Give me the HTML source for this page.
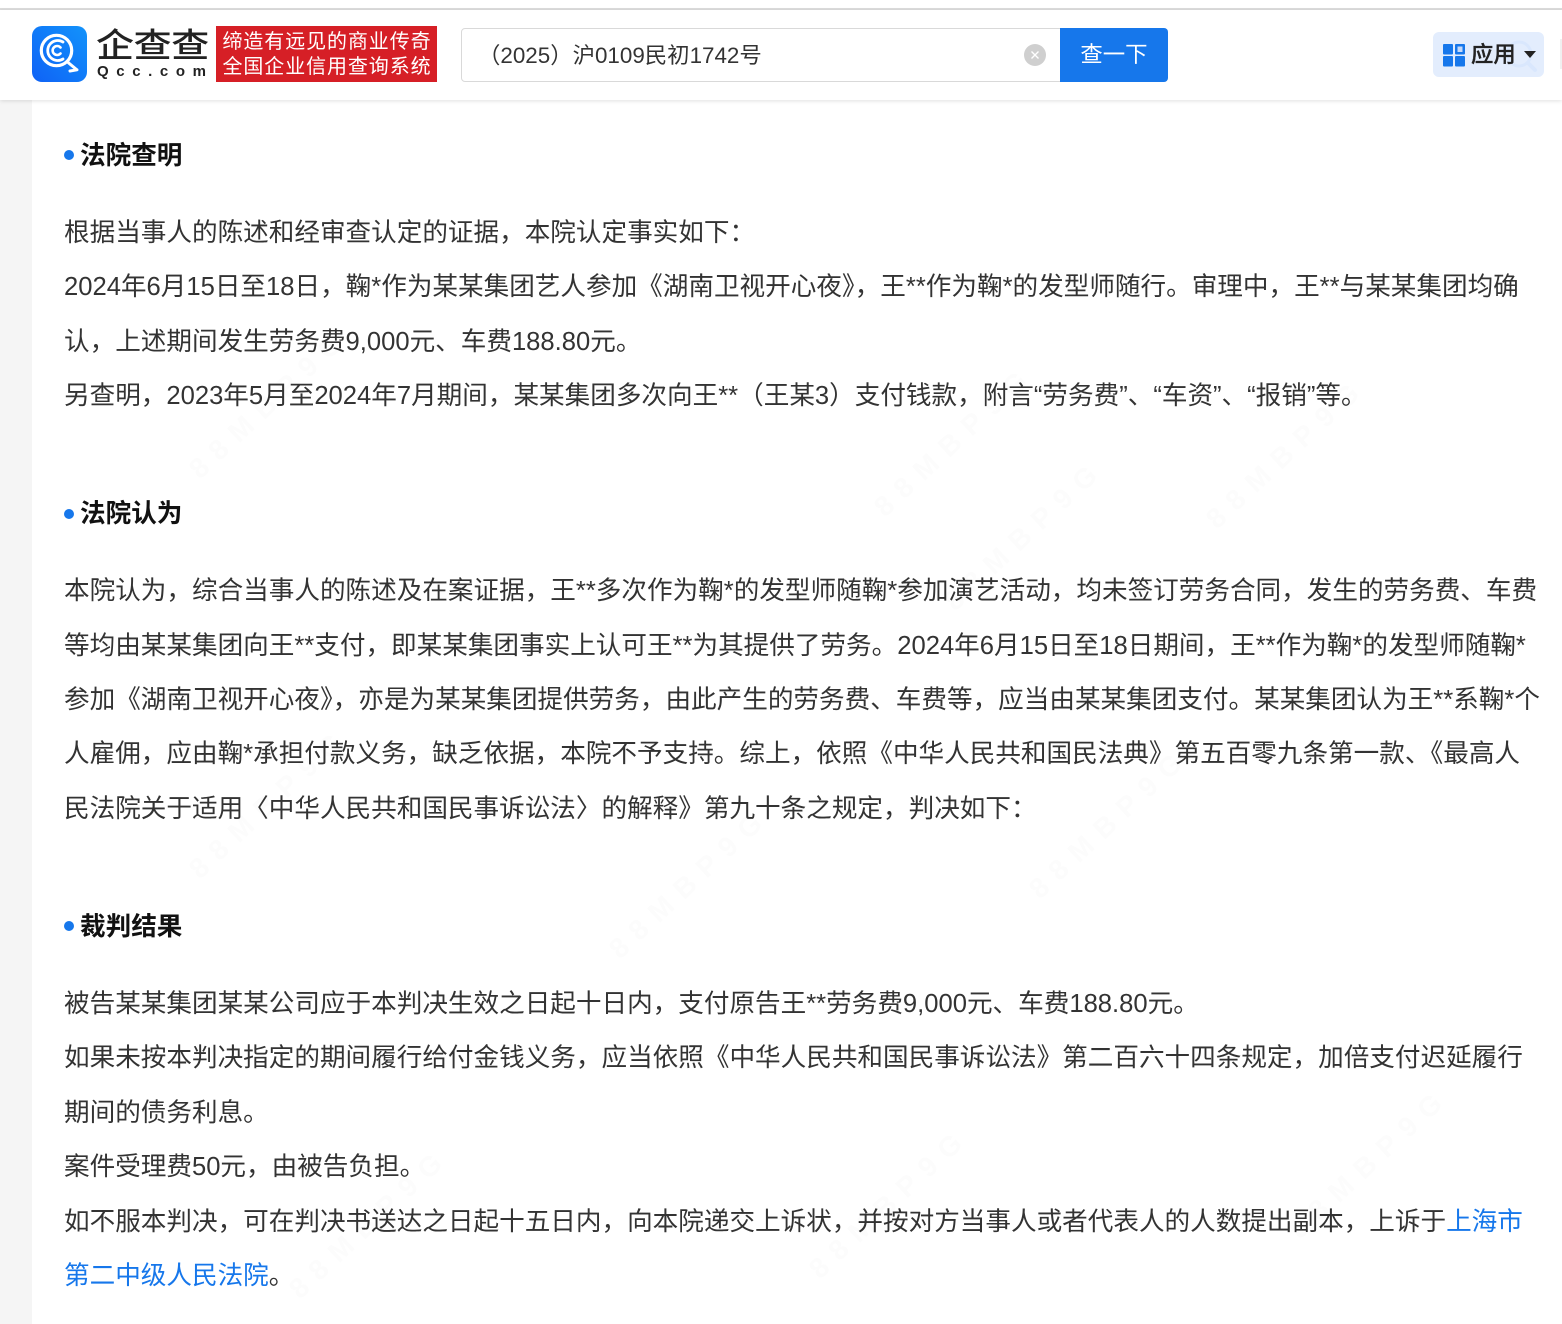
<!DOCTYPE html>
<html lang="zh-CN">
<head>
<meta charset="utf-8">
<title>企查查</title>
<style>
html,body{margin:0;padding:0;background:#fff}
body{width:1562px;height:1324px;position:relative;overflow:hidden;font-family:"Liberation Sans","Noto Sans CJK SC",sans-serif;color:#333}
.abs{position:absolute}
.side{left:0;top:100px;width:32px;height:1224px;background:#f5f5f5}
.top{left:0;top:0;width:1562px;height:8px;background:#fff;border-bottom:2px solid #dcdcdc}
.nav{left:0;top:10px;width:1562px;height:90px;background:#fff;box-shadow:0 1px 4px rgba(0,0,0,.12)}
.l{position:absolute;left:64px;font-size:25.6px;line-height:34px;height:34px;white-space:nowrap;color:#333}
.h{position:absolute;left:80px;font-size:25.6px;line-height:34px;height:34px;font-weight:700;color:#111;white-space:nowrap}
.d{position:absolute;left:64px;width:10px;height:10px;border-radius:50%;background:#1677eb}
a{color:#1677eb;text-decoration:none}
</style>
</head>
<body>
<svg class="abs" style="left:0;top:0" width="1562" height="1324">
<g fill="#fcfcfc" font-family="Liberation Sans" font-weight="700" font-size="28" letter-spacing="11">
<text transform="translate(200 480) rotate(-43)">88MBP9G</text>
<text transform="translate(885 518) rotate(-43)">88MBP9G</text>
<text transform="translate(1217 530) rotate(-43)">88MBP9G</text>
<text transform="translate(955 612) rotate(-43)">88MBP9G</text>
<text transform="translate(200 880) rotate(-43)">88MBP9G</text>
<text transform="translate(620 960) rotate(-43)">88MBP9G</text>
<text transform="translate(1040 900) rotate(-43)">88MBP9G</text>
<text transform="translate(300 1300) rotate(-43)">88MBP9G</text>
<text transform="translate(820 1280) rotate(-43)">88MBP9G</text>
<text transform="translate(1300 1240) rotate(-43)">88MBP9G</text>
</g>
</svg>
<div class="abs side"></div>
<div class="abs top"></div>
<div class="abs nav"></div>

<svg class="abs" style="left:32px;top:26px" width="55" height="56" viewBox="0 0 55 56">
<defs><linearGradient id="g" x1="0" y1="1" x2="1" y2="0"><stop offset="0" stop-color="#0f62f6"/><stop offset="1" stop-color="#1293fb"/></linearGradient></defs>
<rect width="55" height="56" rx="10" fill="url(#g)"/>
<g fill="none" stroke="#fff" stroke-linecap="round">
<circle cx="24.500" cy="24.500" r="15.200" stroke-width="3.200"/>
<path d="M31 16 A10 10 0 1 0 31 33" stroke-width="2.800"/>
<path d="M28.500 21.500 A4.500 4.500 0 1 0 28.500 27.500" stroke-width="2.600"/>
<path d="M35.500 36 L44.500 43.500 M38 45 L45 43.800" stroke-width="3"/>
</g>
</svg>

<div class="abs" style="left:96px;top:18px;font-size:38px;line-height:50px;height:50px;letter-spacing:-.4px;color:#222;white-space:nowrap;font-family:'Noto Sans CJK SC','Liberation Sans',sans-serif;font-weight:500;width:116px;transform:scaleY(.88)">企查查</div>
<div class="abs" style="left:97px;top:64px;font-size:15px;line-height:16px;font-weight:700;letter-spacing:7.600px;color:#222;white-space:nowrap">Qcc.com</div>

<div class="abs" style="left:216px;top:26px;width:221px;height:56px;background:#d61f26"></div>
<div class="abs" style="left:222.500px;top:30px;font-size:20px;line-height:24.500px;letter-spacing:.9px;color:#fff;white-space:nowrap">缔造有远见的商业传奇<br>全国企业信用查询系统</div>

<div class="abs" style="left:461px;top:28px;width:610px;height:52px;border:1px solid #d9d9d9;border-radius:4px 0 0 4px;background:#fff"></div>
<div class="abs" style="left:478px;top:40px;font-size:22.400px;line-height:32px;color:#333;white-space:nowrap">（2025）沪0109民初1742号</div>
<svg class="abs" style="left:1023px;top:44px" width="24" height="24" viewBox="0 0 24 24"><circle cx="12" cy="11" r="11" fill="#cfcfcf"/><path d="M8.500 7.500L15.500 14.500M15.500 7.500L8.500 14.500" stroke="#fff" stroke-width="1.400"/></svg>
<div class="abs" style="left:1060px;top:28px;width:108px;height:54px;background:#1677eb;border-radius:0 4px 4px 0;color:#fff;font-size:22.400px;line-height:54px;text-align:center">查一下</div>

<div class="abs" style="left:1433px;top:32px;width:111px;height:45px;background:#e3edfd;border-radius:6px"></div>
<svg class="abs" style="left:1500px;top:36px" width="42" height="40" viewBox="0 0 42 40"><circle cx="19" cy="18" r="12" fill="none" stroke="#d9e7fd" stroke-width="3"/><path d="M28 27L35 34" stroke="#d9e7fd" stroke-width="4" stroke-linecap="round"/></svg>
<svg class="abs" style="left:1443px;top:43px" width="22" height="24" viewBox="0 0 22 24">
<rect x="0" y="1" width="10" height="10.500" rx="1" fill="#1677eb"/>
<rect x="12" y="1" width="10" height="10.500" rx="1" fill="#1677eb"/><rect x="14.500" y="3.500" width="5" height="5.500" fill="#c5d9f8"/>
<rect x="0" y="13" width="10" height="10.500" rx="1" fill="#1677eb"/>
<rect x="12" y="13" width="10" height="10.500" rx="1" fill="#1677eb"/>
</svg>
<div class="abs" style="left:1471px;top:39px;font-size:22.400px;line-height:32px;color:#222;font-weight:500;white-space:nowrap;-webkit-text-stroke:.3px #222">应用</div>
<svg class="abs" style="left:1524px;top:51px" width="12" height="8"><path d="M0 0H12L6 7Z" fill="#222"/></svg>
<div class="abs" style="left:1560px;top:39px;width:2px;height:30px;background:#f0f0f0"></div>

<div class="d" style="top:150px"></div><div class="h" style="top:139px">法院查明</div>
<div class="l" style="top:216px">根据当事人的陈述和经审查认定的证据，本院认定事实如下：</div>
<div class="l" style="top:270px">2024年6月15日至18日，鞠*作为某某集团艺人参加《湖南卫视开心夜》，王**作为鞠*的发型师随行。审理中，王**与某某集团均确</div>
<div class="l" style="top:325px">认，上述期间发生劳务费9,000元、车费188.80元。</div>
<div class="l" style="top:379px">另查明，2023年5月至2024年7月期间，某某集团多次向王**（王某3）支付钱款，附言“劳务费”、“车资”、“报销”等。</div>

<div class="d" style="top:509px"></div><div class="h" style="top:497px">法院认为</div>
<div class="l" style="top:574px">本院认为，综合当事人的陈述及在案证据，王**多次作为鞠*的发型师随鞠*参加演艺活动，均未签订劳务合同，发生的劳务费、车费</div>
<div class="l" style="top:629px">等均由某某集团向王**支付，即某某集团事实上认可王**为其提供了劳务。2024年6月15日至18日期间，王**作为鞠*的发型师随鞠*</div>
<div class="l" style="top:683px">参加《湖南卫视开心夜》，亦是为某某集团提供劳务，由此产生的劳务费、车费等，应当由某某集团支付。某某集团认为王**系鞠*个</div>
<div class="l" style="top:737px">人雇佣，应由鞠*承担付款义务，缺乏依据，本院不予支持。综上，依照《中华人民共和国民法典》第五百零九条第一款、《最高人</div>
<div class="l" style="top:792px">民法院关于适用〈中华人民共和国民事诉讼法〉的解释》第九十条之规定，判决如下：</div>

<div class="d" style="top:921px"></div><div class="h" style="top:910px">裁判结果</div>
<div class="l" style="top:987px">被告某某集团某某公司应于本判决生效之日起十日内，支付原告王**劳务费9,000元、车费188.80元。</div>
<div class="l" style="top:1041px">如果未按本判决指定的期间履行给付金钱义务，应当依照《中华人民共和国民事诉讼法》第二百六十四条规定，加倍支付迟延履行</div>
<div class="l" style="top:1096px">期间的债务利息。</div>
<div class="l" style="top:1150px">案件受理费50元，由被告负担。</div>
<div class="l" style="top:1205px">如不服本判决，可在判决书送达之日起十五日内，向本院递交上诉状，并按对方当事人或者代表人的人数提出副本，上诉于<a>上海市</a></div>
<div class="l" style="top:1259px"><a>第二中级人民法院</a>。</div>
</body>
</html>
